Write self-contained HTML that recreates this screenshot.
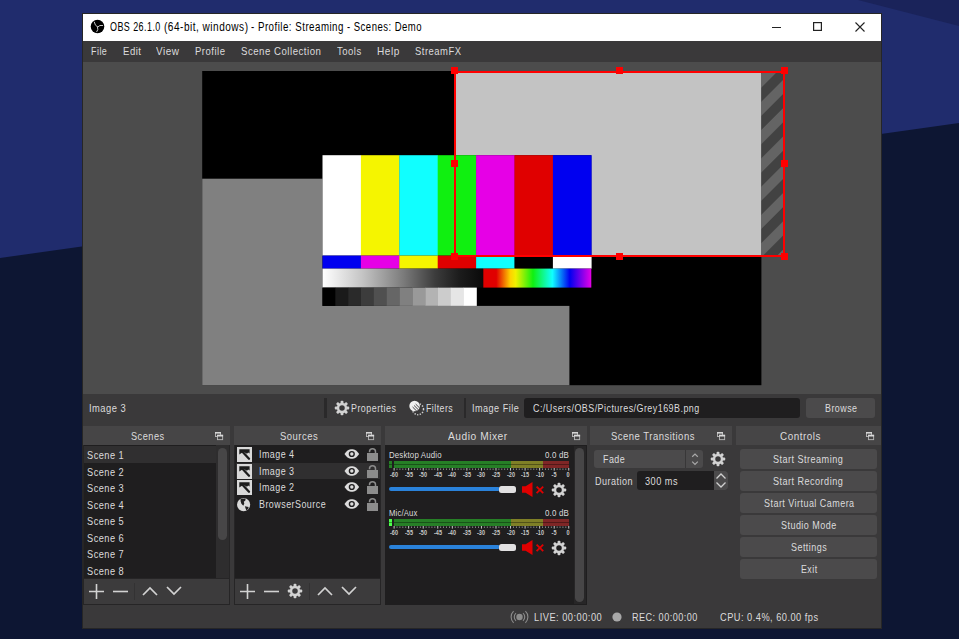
<!DOCTYPE html>
<html><head><meta charset="utf-8"><style>
html,body{margin:0;padding:0;width:959px;height:639px;overflow:hidden;background:#1f2a6b;}
body>div{position:absolute;}
.t{position:absolute;white-space:nowrap;font-family:"Liberation Sans",sans-serif;transform-origin:0 0;}
</style></head><body>
<svg style="position:absolute;left:0px;top:0px;" width="959" height="639" viewBox="0 0 959 639"><rect width="959" height="639" fill="#202c6d"/><polygon points="858,0 959,0 959,26" fill="#1a235a"/><polygon points="0,258 959,123 959,639 0,639" fill="#0d1633"/></svg>
<div style="left:82px;top:13px;width:800.00px;height:616.00px;background:#262626;"></div>
<div style="left:83px;top:14px;width:798.00px;height:614.00px;background:#3a393a;"></div>
<div style="left:83px;top:14px;width:798.00px;height:27.00px;background:#ffffff;"></div>
<svg style="position:absolute;left:90px;top:19px;" width="15" height="15" viewBox="0 0 15 15"><circle cx="7.5" cy="7.5" r="6.8" fill="#000"/><g fill="none" stroke="#c8c8c8" stroke-width="1.0" stroke-linecap="round"><path d="M7.6 8 Q4.8 6.8 4.3 3.2"/><path d="M7.6 8 Q9.6 5.6 12.6 6.4"/><path d="M7.6 8 Q8.6 10.8 6.8 12.8"/></g></svg>
<div class="t" style="left:109.80px;top:21px;font-size:12px;line-height:12px;letter-spacing:0.6px;color:#000;transform:scaleX(0.7463);">OBS 26.1.0</div>
<div class="t" style="left:163.60px;top:21px;font-size:12px;line-height:12px;letter-spacing:0.6px;color:#000;transform:scaleX(0.8375);">(64-bit, windows)</div>
<div class="t" style="left:251.00px;top:21px;font-size:12px;line-height:12px;letter-spacing:0.6px;color:#000;transform:scaleX(0.8098);">- Profile: Streaming</div>
<div class="t" style="left:347.00px;top:21px;font-size:12px;line-height:12px;letter-spacing:0.6px;color:#000;transform:scaleX(0.7942);">- Scenes: Demo</div>
<div style="left:772px;top:26.5px;width:9.00px;height:1.30px;background:#222;"></div>
<svg style="position:absolute;left:813px;top:22px;" width="9" height="9" viewBox="0 0 9 9"><rect x="0.6" y="0.6" width="7.8" height="7.8" fill="none" stroke="#222" stroke-width="1.2"/></svg>
<svg style="position:absolute;left:855px;top:22px;" width="10" height="10" viewBox="0 0 10 10"><path d="M0.5 0.5 L9.5 9.5 M9.5 0.5 L0.5 9.5" stroke="#222" stroke-width="1.1"/></svg>
<div style="left:83px;top:41px;width:798.00px;height:21.00px;background:#3a393a;"></div>
<div class="t" style="left:91.00px;top:46px;font-size:11.5px;line-height:11.5px;letter-spacing:0.6px;color:#dcdbdc;transform:scaleX(0.7783);">File</div>
<div class="t" style="left:122.80px;top:46px;font-size:11.5px;line-height:11.5px;letter-spacing:0.6px;color:#dcdbdc;transform:scaleX(0.8333);">Edit</div>
<div class="t" style="left:156.00px;top:46px;font-size:11.5px;line-height:11.5px;letter-spacing:0.6px;color:#dcdbdc;transform:scaleX(0.8647);">View</div>
<div class="t" style="left:195.00px;top:46px;font-size:11.5px;line-height:11.5px;letter-spacing:0.6px;color:#dcdbdc;transform:scaleX(0.8287);">Profile</div>
<div class="t" style="left:240.50px;top:46px;font-size:11.5px;line-height:11.5px;letter-spacing:0.6px;color:#dcdbdc;transform:scaleX(0.8384);">Scene Collection</div>
<div class="t" style="left:336.80px;top:46px;font-size:11.5px;line-height:11.5px;letter-spacing:0.6px;color:#dcdbdc;transform:scaleX(0.8253);">Tools</div>
<div class="t" style="left:376.90px;top:46px;font-size:11.5px;line-height:11.5px;letter-spacing:0.6px;color:#dcdbdc;transform:scaleX(0.8745);">Help</div>
<div class="t" style="left:414.50px;top:46px;font-size:11.5px;line-height:11.5px;letter-spacing:0.6px;color:#dcdbdc;transform:scaleX(0.8214);">StreamFX</div>
<div style="left:83px;top:62px;width:798.00px;height:332.00px;background:#4c4c4c;"></div>
<svg style="position:absolute;left:0px;top:0px;" width="959" height="639" viewBox="0 0 959 639"><defs><linearGradient id="gw" x1="0" x2="1"><stop offset="0" stop-color="#fff"/><stop offset="0.25" stop-color="#c4c4c4"/><stop offset="0.5" stop-color="#7c7c7c"/><stop offset="0.7" stop-color="#3c3c3c"/><stop offset="0.85" stop-color="#1c1c1c"/><stop offset="1" stop-color="#0a0a0a"/></linearGradient><linearGradient id="sp" x1="0" x2="1"><stop offset="0" stop-color="#e00000"/><stop offset="0.12" stop-color="#e00000"/><stop offset="0.25" stop-color="#ffd000"/><stop offset="0.3" stop-color="#f0f000"/><stop offset="0.46" stop-color="#10f010"/><stop offset="0.64" stop-color="#10ffff"/><stop offset="0.8" stop-color="#0000f0"/><stop offset="1" stop-color="#e600e6"/></linearGradient><pattern id="st" patternUnits="userSpaceOnUse" width="20" height="20" patternTransform="translate(0,14.5) rotate(45)"><rect width="20" height="20" fill="#424242"/><rect width="10" height="20" fill="#646464"/></pattern></defs><rect x="202.2" y="71" width="559.2" height="314.2" fill="#000"/><rect x="202.2" y="178.7" width="367.2" height="206.5" fill="#808080"/><rect x="456" y="73" width="305.4" height="182" fill="#c3c3c3"/><rect x="761.4" y="73" width="21.6" height="182" fill="url(#st)"/><rect x="322.5" y="155.2" width="268.8" height="150.7" fill="#000"/><rect x="322.50" y="155.2" width="38.70" height="100.40" fill="#ffffff"/><rect x="360.90" y="155.2" width="38.70" height="100.40" fill="#f5f500"/><rect x="399.30" y="155.2" width="38.70" height="100.40" fill="#10ffff"/><rect x="437.70" y="155.2" width="38.70" height="100.40" fill="#10f010"/><rect x="476.10" y="155.2" width="38.70" height="100.40" fill="#e600e6"/><rect x="514.50" y="155.2" width="38.70" height="100.40" fill="#e00000"/><rect x="552.90" y="155.2" width="38.70" height="100.40" fill="#0000f0"/><rect x="322.50" y="255.6" width="38.70" height="13.00" fill="#0000f0"/><rect x="360.90" y="255.6" width="38.70" height="13.00" fill="#e600e6"/><rect x="399.30" y="255.6" width="38.70" height="13.00" fill="#f5f500"/><rect x="437.70" y="255.6" width="38.70" height="13.00" fill="#e00000"/><rect x="476.10" y="255.6" width="38.70" height="13.00" fill="#10ffff"/><rect x="514.50" y="255.6" width="38.70" height="13.00" fill="#000000"/><rect x="552.90" y="255.6" width="38.70" height="13.00" fill="#ffffff"/><rect x="322.5" y="268.6" width="160.8" height="19" fill="url(#gw)"/><rect x="483.3" y="268.6" width="108" height="19" fill="url(#sp)"/><rect x="322.50" y="287.6" width="13.13" height="18.3" fill="rgb(0,0,0)"/><rect x="335.33" y="287.6" width="13.13" height="18.3" fill="rgb(26,26,26)"/><rect x="348.17" y="287.6" width="13.13" height="18.3" fill="rgb(42,42,42)"/><rect x="361.00" y="287.6" width="13.13" height="18.3" fill="rgb(60,60,60)"/><rect x="373.83" y="287.6" width="13.13" height="18.3" fill="rgb(80,80,80)"/><rect x="386.67" y="287.6" width="13.13" height="18.3" fill="rgb(102,102,102)"/><rect x="399.50" y="287.6" width="13.13" height="18.3" fill="rgb(128,128,128)"/><rect x="412.33" y="287.6" width="13.13" height="18.3" fill="rgb(153,153,153)"/><rect x="425.17" y="287.6" width="13.13" height="18.3" fill="rgb(179,179,179)"/><rect x="438.00" y="287.6" width="13.13" height="18.3" fill="rgb(204,204,204)"/><rect x="450.83" y="287.6" width="13.13" height="18.3" fill="rgb(230,230,230)"/><rect x="463.67" y="287.6" width="13.13" height="18.3" fill="rgb(255,255,255)"/><g fill="#ff0000"><rect x="454" y="71" width="331" height="2"/><rect x="454" y="255" width="331" height="2"/><rect x="454" y="71" width="2" height="186"/><rect x="783" y="71" width="2" height="186"/><rect x="451.0" y="67.0" width="7" height="7"/><rect x="451.0" y="160.0" width="7" height="7"/><rect x="451.0" y="253.0" width="7" height="7"/><rect x="616.0" y="67.0" width="7" height="7"/><rect x="616.0" y="253.0" width="7" height="7"/><rect x="781.0" y="67.0" width="7" height="7"/><rect x="781.0" y="160.0" width="7" height="7"/><rect x="781.0" y="253.0" width="7" height="7"/></g></svg>
<div style="left:83px;top:394px;width:798.00px;height:32.00px;background:#3a393a;"></div>
<div class="t" style="left:88.75px;top:403px;font-size:11.5px;line-height:11.5px;letter-spacing:0.6px;color:#dcdbdc;transform:scaleX(0.8131);">Image 3</div>
<div style="left:324.3px;top:398px;width:2.40px;height:20.00px;background:#2a292a;"></div>
<svg style="position:absolute;left:334.2px;top:400.3px;" width="16" height="16" viewBox="0 0 16 16"><g transform="translate(8 8) scale(1.0)" fill="#d2d2d2"><rect x="-1.45" y="-7.25" width="2.9" height="3.4" rx="1" transform="rotate(0)"/><rect x="-1.45" y="-7.25" width="2.9" height="3.4" rx="1" transform="rotate(45)"/><rect x="-1.45" y="-7.25" width="2.9" height="3.4" rx="1" transform="rotate(90)"/><rect x="-1.45" y="-7.25" width="2.9" height="3.4" rx="1" transform="rotate(135)"/><rect x="-1.45" y="-7.25" width="2.9" height="3.4" rx="1" transform="rotate(180)"/><rect x="-1.45" y="-7.25" width="2.9" height="3.4" rx="1" transform="rotate(225)"/><rect x="-1.45" y="-7.25" width="2.9" height="3.4" rx="1" transform="rotate(270)"/><rect x="-1.45" y="-7.25" width="2.9" height="3.4" rx="1" transform="rotate(315)"/><circle r="5.15"/><circle r="2.75" fill="#3a393a"/></g></svg>
<div class="t" style="left:351.30px;top:403px;font-size:11.5px;line-height:11.5px;letter-spacing:0.6px;color:#dcdbdc;transform:scaleX(0.7768);">Properties</div>
<svg style="position:absolute;left:409px;top:400px;" width="16" height="16" viewBox="0 0 16 16"><defs><clipPath id="fc"><circle cx="5.6" cy="6" r="5.3"/></clipPath></defs><circle cx="9" cy="9.2" r="5.5" fill="none" stroke="#cfcfcf" stroke-width="1.5" stroke-dasharray="1.25 1.45"/><circle cx="5.6" cy="6" r="5.3" fill="#3a393a"/><circle cx="5.6" cy="6" r="5.3" fill="#f0f0f0"/><g stroke="#3a393a" stroke-width="0.95" clip-path="url(#fc)"><path d="M5.1 5.5 L10 10.4 M6.7 4.1 L11.5 8.9 M3.6 7 L8.5 11.9"/></g></svg>
<div class="t" style="left:425.80px;top:403px;font-size:11.5px;line-height:11.5px;letter-spacing:0.6px;color:#dcdbdc;transform:scaleX(0.7650);">Filters</div>
<div style="left:463.7px;top:398px;width:2.60px;height:20.00px;background:#2a292a;"></div>
<div class="t" style="left:472.00px;top:403px;font-size:11.5px;line-height:11.5px;letter-spacing:0.6px;color:#dcdbdc;transform:scaleX(0.7902);">Image File</div>
<div style="left:524px;top:398px;width:276.00px;height:20.00px;background:#1f1e1f;border-radius:3px;"></div>
<div class="t" style="left:532.50px;top:403px;font-size:11.5px;line-height:11.5px;letter-spacing:0.6px;color:#dcdbdc;transform:scaleX(0.7763);">C:/Users/OBS/Pictures/Grey169B.png</div>
<div style="left:806px;top:398px;width:69.00px;height:20.00px;background:#4b4a4b;border-radius:3px;"></div>
<div class="t" style="left:824.70px;top:403px;font-size:11.5px;line-height:11.5px;letter-spacing:0.6px;color:#dcdbdc;transform:scaleX(0.7748);">Browse</div>
<div style="left:83px;top:426px;width:147.00px;height:19.00px;background:#464546;"></div>
<div class="t" style="left:131.25px;top:431px;font-size:11.5px;line-height:11.5px;letter-spacing:0.6px;color:#dcdbdc;transform:scaleX(0.8007);">Scenes</div>
<svg style="position:absolute;left:215px;top:432px;" width="9" height="9" viewBox="0 0 9 9"><rect x="0.45" y="0.45" width="5.1" height="4.1" fill="#464546" stroke="#b8b8b8" stroke-width="0.9"/><rect x="0" y="0" width="6" height="1.6" fill="#d4d4d4"/><rect x="2.45" y="3.25" width="5.2" height="4.4" fill="#464546" stroke="#b8b8b8" stroke-width="0.9"/><rect x="2" y="2.8" width="6.1" height="1.7" fill="#dadada"/></svg>
<div style="left:234px;top:426px;width:147.00px;height:19.00px;background:#464546;"></div>
<div class="t" style="left:279.75px;top:431px;font-size:11.5px;line-height:11.5px;letter-spacing:0.6px;color:#dcdbdc;transform:scaleX(0.8242);">Sources</div>
<svg style="position:absolute;left:366px;top:432px;" width="9" height="9" viewBox="0 0 9 9"><rect x="0.45" y="0.45" width="5.1" height="4.1" fill="#464546" stroke="#b8b8b8" stroke-width="0.9"/><rect x="0" y="0" width="6" height="1.6" fill="#d4d4d4"/><rect x="2.45" y="3.25" width="5.2" height="4.4" fill="#464546" stroke="#b8b8b8" stroke-width="0.9"/><rect x="2" y="2.8" width="6.1" height="1.7" fill="#dadada"/></svg>
<div style="left:385px;top:426px;width:202.00px;height:19.00px;background:#464546;"></div>
<div class="t" style="left:447.80px;top:431px;font-size:11.5px;line-height:11.5px;letter-spacing:0.6px;color:#dcdbdc;transform:scaleX(0.8876);">Audio Mixer</div>
<svg style="position:absolute;left:572px;top:432px;" width="9" height="9" viewBox="0 0 9 9"><rect x="0.45" y="0.45" width="5.1" height="4.1" fill="#464546" stroke="#b8b8b8" stroke-width="0.9"/><rect x="0" y="0" width="6" height="1.6" fill="#d4d4d4"/><rect x="2.45" y="3.25" width="5.2" height="4.4" fill="#464546" stroke="#b8b8b8" stroke-width="0.9"/><rect x="2" y="2.8" width="6.1" height="1.7" fill="#dadada"/></svg>
<div style="left:590px;top:426px;width:142.00px;height:19.00px;background:#464546;"></div>
<div class="t" style="left:610.80px;top:431px;font-size:11.5px;line-height:11.5px;letter-spacing:0.6px;color:#dcdbdc;transform:scaleX(0.8257);">Scene Transitions</div>
<svg style="position:absolute;left:717px;top:432px;" width="9" height="9" viewBox="0 0 9 9"><rect x="0.45" y="0.45" width="5.1" height="4.1" fill="#464546" stroke="#b8b8b8" stroke-width="0.9"/><rect x="0" y="0" width="6" height="1.6" fill="#d4d4d4"/><rect x="2.45" y="3.25" width="5.2" height="4.4" fill="#464546" stroke="#b8b8b8" stroke-width="0.9"/><rect x="2" y="2.8" width="6.1" height="1.7" fill="#dadada"/></svg>
<div style="left:736px;top:426px;width:145.00px;height:19.00px;background:#464546;"></div>
<div class="t" style="left:779.70px;top:431px;font-size:11.5px;line-height:11.5px;letter-spacing:0.6px;color:#dcdbdc;transform:scaleX(0.8574);">Controls</div>
<svg style="position:absolute;left:866px;top:432px;" width="9" height="9" viewBox="0 0 9 9"><rect x="0.45" y="0.45" width="5.1" height="4.1" fill="#464546" stroke="#b8b8b8" stroke-width="0.9"/><rect x="0" y="0" width="6" height="1.6" fill="#d4d4d4"/><rect x="2.45" y="3.25" width="5.2" height="4.4" fill="#464546" stroke="#b8b8b8" stroke-width="0.9"/><rect x="2" y="2.8" width="6.1" height="1.7" fill="#dadada"/></svg>
<div style="left:83px;top:445px;width:147.00px;height:160.00px;background:#262526;"></div>
<div style="left:84px;top:445px;width:132.00px;height:133.00px;background:#1f1e1f;"></div>
<div style="left:216px;top:445px;width:13.00px;height:133.00px;background:#2e2d2e;"></div>
<div style="left:84px;top:446px;width:132.00px;height:17.00px;background:#302f30;"></div>
<div style="left:218px;top:448px;width:9.00px;height:92.00px;background:#474647;border-radius:4.5px;"></div>
<div class="t" style="left:86.70px;top:450px;font-size:11.5px;line-height:11.5px;letter-spacing:0.6px;color:#dcdbdc;transform:scaleX(0.8013);">Scene 1</div>
<div class="t" style="left:86.70px;top:467px;font-size:11.5px;line-height:11.5px;letter-spacing:0.6px;color:#dcdbdc;transform:scaleX(0.8013);">Scene 2</div>
<div class="t" style="left:86.70px;top:483px;font-size:11.5px;line-height:11.5px;letter-spacing:0.6px;color:#dcdbdc;transform:scaleX(0.8013);">Scene 3</div>
<div class="t" style="left:86.70px;top:500px;font-size:11.5px;line-height:11.5px;letter-spacing:0.6px;color:#dcdbdc;transform:scaleX(0.8013);">Scene 4</div>
<div class="t" style="left:86.70px;top:516px;font-size:11.5px;line-height:11.5px;letter-spacing:0.6px;color:#dcdbdc;transform:scaleX(0.8013);">Scene 5</div>
<div class="t" style="left:86.70px;top:533px;font-size:11.5px;line-height:11.5px;letter-spacing:0.6px;color:#dcdbdc;transform:scaleX(0.8013);">Scene 6</div>
<div class="t" style="left:86.70px;top:549px;font-size:11.5px;line-height:11.5px;letter-spacing:0.6px;color:#dcdbdc;transform:scaleX(0.8013);">Scene 7</div>
<div class="t" style="left:86.70px;top:566px;font-size:11.5px;line-height:11.5px;letter-spacing:0.6px;color:#dcdbdc;transform:scaleX(0.8013);">Scene 8</div>
<div style="left:83px;top:578px;width:147.00px;height:27.00px;background:#262526;"></div>
<div style="left:84px;top:579px;width:145.00px;height:25.00px;background:#3c3b3c;"></div>
<svg style="position:absolute;left:89px;top:584px;" width="15" height="15" viewBox="0 0 15 15"><path d="M7.5 0 V15 M0 7.5 H15" stroke="#d2d2d2" stroke-width="1.6"/></svg>
<svg style="position:absolute;left:113px;top:584px;" width="15" height="15" viewBox="0 0 15 15"><path d="M0 7.5 H15" stroke="#d2d2d2" stroke-width="1.6"/></svg>
<div style="left:134px;top:583px;width:1.00px;height:17.00px;background:#333233;"></div>
<svg style="position:absolute;left:142px;top:586px;" width="16" height="10" viewBox="0 0 16 10"><path d="M1 9 L8 2 L15 9" fill="none" stroke="#d2d2d2" stroke-width="1.7"/></svg>
<svg style="position:absolute;left:165.5px;top:586px;" width="16" height="10" viewBox="0 0 16 10"><path d="M1 1 L8 8 L15 1" fill="none" stroke="#d2d2d2" stroke-width="1.7"/></svg>
<div style="left:234px;top:445px;width:147.00px;height:160.00px;background:#262526;"></div>
<div style="left:235px;top:445px;width:145.00px;height:133.00px;background:#1f1e1f;"></div>
<div style="left:236px;top:462.5px;width:144.00px;height:16.50px;background:#302f30;"></div>
<svg style="position:absolute;left:237px;top:447.0px;" width="15" height="15" viewBox="0 0 15 15"><rect width="15" height="15" fill="#d9d9d9"/><path d="M2.3 2.2 H12.6 V6.5 L11.2 5.5 L10 6.8 L6.4 4.8 L2.3 7.5 Z" fill="#1c1c1c"/><path d="M5 4.3 L12 11.7" stroke="#1c1c1c" stroke-width="2.3" stroke-linecap="round"/></svg>
<div class="t" style="left:259.20px;top:449px;font-size:11.5px;line-height:11.5px;letter-spacing:0.6px;color:#dcdbdc;transform:scaleX(0.7762);">Image 4</div>
<svg style="position:absolute;left:343.5px;top:449.2px;" width="16" height="10" viewBox="0 0 16 10"><path d="M0.5,5 C3,1.2 5,0.2 7.8,0.2 C10.6,0.2 12.6,1.2 15.1,5 C12.6,8.8 10.6,9.8 7.8,9.8 C5,9.8 3,8.8 0.5,5 Z" fill="#dcdcdc"/><circle cx="7.8" cy="5" r="3.1" fill="#1f1e1f"/><circle cx="7.8" cy="5" r="1.7" fill="#dcdcdc"/></svg>
<svg style="position:absolute;left:366px;top:446.0px;" width="13" height="16" viewBox="0 0 13 16"><path d="M3.5 6.2 V5.7 A3 3 0 0 1 9.5 5.7 V7.5" fill="none" stroke="#8c8c8c" stroke-width="1.5"/><rect x="1" y="7" width="11" height="8" fill="#8c8c8c"/></svg>
<svg style="position:absolute;left:237px;top:463.55px;" width="15" height="15" viewBox="0 0 15 15"><rect width="15" height="15" fill="#d9d9d9"/><path d="M2.3 2.2 H12.6 V6.5 L11.2 5.5 L10 6.8 L6.4 4.8 L2.3 7.5 Z" fill="#1c1c1c"/><path d="M5 4.3 L12 11.7" stroke="#1c1c1c" stroke-width="2.3" stroke-linecap="round"/></svg>
<div class="t" style="left:259.20px;top:466px;font-size:11.5px;line-height:11.5px;letter-spacing:0.6px;color:#dcdbdc;transform:scaleX(0.7762);">Image 3</div>
<svg style="position:absolute;left:343.5px;top:465.75px;" width="16" height="10" viewBox="0 0 16 10"><path d="M0.5,5 C3,1.2 5,0.2 7.8,0.2 C10.6,0.2 12.6,1.2 15.1,5 C12.6,8.8 10.6,9.8 7.8,9.8 C5,9.8 3,8.8 0.5,5 Z" fill="#dcdcdc"/><circle cx="7.8" cy="5" r="3.1" fill="#1f1e1f"/><circle cx="7.8" cy="5" r="1.7" fill="#dcdcdc"/></svg>
<svg style="position:absolute;left:366px;top:462.55px;" width="13" height="16" viewBox="0 0 13 16"><path d="M3.5 6.2 V5.7 A3 3 0 0 1 9.5 5.7 V7.5" fill="none" stroke="#8c8c8c" stroke-width="1.5"/><rect x="1" y="7" width="11" height="8" fill="#8c8c8c"/></svg>
<svg style="position:absolute;left:237px;top:480.1px;" width="15" height="15" viewBox="0 0 15 15"><rect width="15" height="15" fill="#d9d9d9"/><path d="M2.3 2.2 H12.6 V6.5 L11.2 5.5 L10 6.8 L6.4 4.8 L2.3 7.5 Z" fill="#1c1c1c"/><path d="M5 4.3 L12 11.7" stroke="#1c1c1c" stroke-width="2.3" stroke-linecap="round"/></svg>
<div class="t" style="left:259.20px;top:482px;font-size:11.5px;line-height:11.5px;letter-spacing:0.6px;color:#dcdbdc;transform:scaleX(0.7762);">Image 2</div>
<svg style="position:absolute;left:343.5px;top:482.3px;" width="16" height="10" viewBox="0 0 16 10"><path d="M0.5,5 C3,1.2 5,0.2 7.8,0.2 C10.6,0.2 12.6,1.2 15.1,5 C12.6,8.8 10.6,9.8 7.8,9.8 C5,9.8 3,8.8 0.5,5 Z" fill="#dcdcdc"/><circle cx="7.8" cy="5" r="3.1" fill="#1f1e1f"/><circle cx="7.8" cy="5" r="1.7" fill="#dcdcdc"/></svg>
<svg style="position:absolute;left:366px;top:479.1px;" width="13" height="16" viewBox="0 0 13 16"><path d="M3.5 6.2 V5.7 A3 3 0 0 1 9.5 5.7 V7.5" fill="none" stroke="#8c8c8c" stroke-width="1.5"/><rect x="1" y="7" width="11" height="8" fill="#8c8c8c"/></svg>
<svg style="position:absolute;left:237px;top:497.65px;" width="14" height="14" viewBox="0 0 14 14"><circle cx="6.6" cy="6.65" r="6.6" fill="#d9d9d9"/><path d="M3.6 0.8 L8.6 0.5 L8.4 2.6 L6.8 3.8 L7.3 5.6 L6.3 7.8 L4.4 5.8 L3.6 3.2 Z" fill="#1f1e1f"/><path d="M7.9 8.2 L11.6 9 L11.2 10.8 L9.4 12.6 L8.7 10.8 Z" fill="#1f1e1f"/></svg>
<div class="t" style="left:259.20px;top:499px;font-size:11.5px;line-height:11.5px;letter-spacing:0.6px;color:#dcdbdc;transform:scaleX(0.7762);">BrowserSource</div>
<svg style="position:absolute;left:343.5px;top:498.85px;" width="16" height="10" viewBox="0 0 16 10"><path d="M0.5,5 C3,1.2 5,0.2 7.8,0.2 C10.6,0.2 12.6,1.2 15.1,5 C12.6,8.8 10.6,9.8 7.8,9.8 C5,9.8 3,8.8 0.5,5 Z" fill="#dcdcdc"/><circle cx="7.8" cy="5" r="3.1" fill="#1f1e1f"/><circle cx="7.8" cy="5" r="1.7" fill="#dcdcdc"/></svg>
<svg style="position:absolute;left:366px;top:495.65px;" width="13" height="16" viewBox="0 0 13 16"><path d="M3.5 6.2 V5.7 A3 3 0 0 1 9.5 5.7 V7.5" fill="none" stroke="#8c8c8c" stroke-width="1.5"/><rect x="1" y="7" width="11" height="8" fill="#8c8c8c"/></svg>
<div style="left:234px;top:578px;width:147.00px;height:27.00px;background:#262526;"></div>
<div style="left:235px;top:579px;width:145.00px;height:25.00px;background:#3c3b3c;"></div>
<svg style="position:absolute;left:240px;top:584px;" width="15" height="15" viewBox="0 0 15 15"><path d="M7.5 0 V15 M0 7.5 H15" stroke="#d2d2d2" stroke-width="1.6"/></svg>
<svg style="position:absolute;left:264px;top:584px;" width="15" height="15" viewBox="0 0 15 15"><path d="M0 7.5 H15" stroke="#d2d2d2" stroke-width="1.6"/></svg>
<svg style="position:absolute;left:287.4px;top:583.4px;" width="16" height="16" viewBox="0 0 16 16"><g transform="translate(8 8) scale(1.0)" fill="#d2d2d2"><rect x="-1.45" y="-7.25" width="2.9" height="3.4" rx="1" transform="rotate(0)"/><rect x="-1.45" y="-7.25" width="2.9" height="3.4" rx="1" transform="rotate(45)"/><rect x="-1.45" y="-7.25" width="2.9" height="3.4" rx="1" transform="rotate(90)"/><rect x="-1.45" y="-7.25" width="2.9" height="3.4" rx="1" transform="rotate(135)"/><rect x="-1.45" y="-7.25" width="2.9" height="3.4" rx="1" transform="rotate(180)"/><rect x="-1.45" y="-7.25" width="2.9" height="3.4" rx="1" transform="rotate(225)"/><rect x="-1.45" y="-7.25" width="2.9" height="3.4" rx="1" transform="rotate(270)"/><rect x="-1.45" y="-7.25" width="2.9" height="3.4" rx="1" transform="rotate(315)"/><circle r="5.15"/><circle r="2.75" fill="#3c3b3c"/></g></svg>
<div style="left:309px;top:583px;width:1.00px;height:17.00px;background:#333233;"></div>
<svg style="position:absolute;left:316.5px;top:586px;" width="16" height="10" viewBox="0 0 16 10"><path d="M1 9 L8 2 L15 9" fill="none" stroke="#d2d2d2" stroke-width="1.7"/></svg>
<svg style="position:absolute;left:340.5px;top:586px;" width="16" height="10" viewBox="0 0 16 10"><path d="M1 1 L8 8 L15 1" fill="none" stroke="#d2d2d2" stroke-width="1.7"/></svg>
<div style="left:385px;top:445px;width:202.00px;height:160.00px;background:#1f1e1f;"></div>
<div style="left:574px;top:446px;width:12.00px;height:158.00px;background:#272627;"></div>
<div style="left:575px;top:448px;width:9.00px;height:154.00px;background:#474647;border-radius:4.5px;"></div>
<div class="t" style="left:389.40px;top:451px;font-size:9px;line-height:9px;letter-spacing:0.2px;color:#dcdbdc;transform:scaleX(0.8692);">Desktop Audio</div>
<div class="t" style="left:545.25px;top:451px;font-size:9px;line-height:9px;letter-spacing:0.2px;color:#dcdbdc;transform:scaleX(0.8796);">0.0 dB</div>
<div style="left:394.1px;top:461.4px;width:116.50px;height:6.60px;background:#267f26;"></div>
<div style="left:510.6px;top:461.4px;width:32.40px;height:6.60px;background:#7f7f26;"></div>
<div style="left:543px;top:461.4px;width:26.00px;height:6.60px;background:#7f2626;"></div>
<div style="left:389.4px;top:461.4px;width:2.80px;height:6.60px;background:#267f26;"></div>
<div style="left:389.4px;top:464.3px;width:179.60px;height:0.60px;background:rgba(0,0,0,0.35);"></div>
<div style="left:392.2px;top:461.4px;width:1.90px;height:6.60px;background:#1f1e1f;"></div>
<svg style="position:absolute;left:389px;top:468.1px;" width="182" height="3" viewBox="0 0 182 3"><rect x="4.60" y="0" width="1" height="2.6" fill="#c8c8c8"/><rect x="7.61" y="0.4" width="0.8" height="1.6" fill="#9a9a9a"/><rect x="10.52" y="0.4" width="0.8" height="1.6" fill="#9a9a9a"/><rect x="13.43" y="0.4" width="0.8" height="1.6" fill="#9a9a9a"/><rect x="16.34" y="0.4" width="0.8" height="1.6" fill="#9a9a9a"/><rect x="19.15" y="0" width="1" height="2.6" fill="#c8c8c8"/><rect x="22.16" y="0.4" width="0.8" height="1.6" fill="#9a9a9a"/><rect x="25.08" y="0.4" width="0.8" height="1.6" fill="#9a9a9a"/><rect x="27.99" y="0.4" width="0.8" height="1.6" fill="#9a9a9a"/><rect x="30.90" y="0.4" width="0.8" height="1.6" fill="#9a9a9a"/><rect x="33.71" y="0" width="1" height="2.6" fill="#c8c8c8"/><rect x="36.72" y="0.4" width="0.8" height="1.6" fill="#9a9a9a"/><rect x="39.63" y="0.4" width="0.8" height="1.6" fill="#9a9a9a"/><rect x="42.54" y="0.4" width="0.8" height="1.6" fill="#9a9a9a"/><rect x="45.45" y="0.4" width="0.8" height="1.6" fill="#9a9a9a"/><rect x="48.26" y="0" width="1" height="2.6" fill="#c8c8c8"/><rect x="51.27" y="0.4" width="0.8" height="1.6" fill="#9a9a9a"/><rect x="54.18" y="0.4" width="0.8" height="1.6" fill="#9a9a9a"/><rect x="57.10" y="0.4" width="0.8" height="1.6" fill="#9a9a9a"/><rect x="60.01" y="0.4" width="0.8" height="1.6" fill="#9a9a9a"/><rect x="62.82" y="0" width="1" height="2.6" fill="#c8c8c8"/><rect x="65.83" y="0.4" width="0.8" height="1.6" fill="#9a9a9a"/><rect x="68.74" y="0.4" width="0.8" height="1.6" fill="#9a9a9a"/><rect x="71.65" y="0.4" width="0.8" height="1.6" fill="#9a9a9a"/><rect x="74.56" y="0.4" width="0.8" height="1.6" fill="#9a9a9a"/><rect x="77.37" y="0" width="1" height="2.6" fill="#c8c8c8"/><rect x="80.38" y="0.4" width="0.8" height="1.6" fill="#9a9a9a"/><rect x="83.29" y="0.4" width="0.8" height="1.6" fill="#9a9a9a"/><rect x="86.20" y="0.4" width="0.8" height="1.6" fill="#9a9a9a"/><rect x="89.11" y="0.4" width="0.8" height="1.6" fill="#9a9a9a"/><rect x="91.93" y="0" width="1" height="2.6" fill="#c8c8c8"/><rect x="94.94" y="0.4" width="0.8" height="1.6" fill="#9a9a9a"/><rect x="97.85" y="0.4" width="0.8" height="1.6" fill="#9a9a9a"/><rect x="100.76" y="0.4" width="0.8" height="1.6" fill="#9a9a9a"/><rect x="103.67" y="0.4" width="0.8" height="1.6" fill="#9a9a9a"/><rect x="106.48" y="0" width="1" height="2.6" fill="#c8c8c8"/><rect x="109.49" y="0.4" width="0.8" height="1.6" fill="#9a9a9a"/><rect x="112.40" y="0.4" width="0.8" height="1.6" fill="#9a9a9a"/><rect x="115.31" y="0.4" width="0.8" height="1.6" fill="#9a9a9a"/><rect x="118.22" y="0.4" width="0.8" height="1.6" fill="#9a9a9a"/><rect x="121.03" y="0" width="1" height="2.6" fill="#c8c8c8"/><rect x="124.04" y="0.4" width="0.8" height="1.6" fill="#9a9a9a"/><rect x="126.96" y="0.4" width="0.8" height="1.6" fill="#9a9a9a"/><rect x="129.87" y="0.4" width="0.8" height="1.6" fill="#9a9a9a"/><rect x="132.78" y="0.4" width="0.8" height="1.6" fill="#9a9a9a"/><rect x="135.59" y="0" width="1" height="2.6" fill="#c8c8c8"/><rect x="138.60" y="0.4" width="0.8" height="1.6" fill="#9a9a9a"/><rect x="141.51" y="0.4" width="0.8" height="1.6" fill="#9a9a9a"/><rect x="144.42" y="0.4" width="0.8" height="1.6" fill="#9a9a9a"/><rect x="147.33" y="0.4" width="0.8" height="1.6" fill="#9a9a9a"/><rect x="150.14" y="0" width="1" height="2.6" fill="#c8c8c8"/><rect x="153.15" y="0.4" width="0.8" height="1.6" fill="#9a9a9a"/><rect x="156.06" y="0.4" width="0.8" height="1.6" fill="#9a9a9a"/><rect x="158.97" y="0.4" width="0.8" height="1.6" fill="#9a9a9a"/><rect x="161.88" y="0.4" width="0.8" height="1.6" fill="#9a9a9a"/><rect x="164.70" y="0" width="1" height="2.6" fill="#c8c8c8"/><rect x="167.71" y="0.4" width="0.8" height="1.6" fill="#9a9a9a"/><rect x="170.62" y="0.4" width="0.8" height="1.6" fill="#9a9a9a"/><rect x="173.53" y="0.4" width="0.8" height="1.6" fill="#9a9a9a"/><rect x="176.44" y="0.4" width="0.8" height="1.6" fill="#9a9a9a"/><rect x="179.25" y="0" width="1" height="2.6" fill="#c8c8c8"/></svg>
<div class="t" style="left:386.10px;top:472px;width:16px;text-align:center;font-size:6.5px;line-height:6.5px;color:#c8c8c8;font-weight:bold;transform:scaleX(0.85);transform-origin:50% 0">-60</div>
<div class="t" style="left:400.65px;top:472px;width:16px;text-align:center;font-size:6.5px;line-height:6.5px;color:#c8c8c8;font-weight:bold;transform:scaleX(0.85);transform-origin:50% 0">-55</div>
<div class="t" style="left:415.21px;top:472px;width:16px;text-align:center;font-size:6.5px;line-height:6.5px;color:#c8c8c8;font-weight:bold;transform:scaleX(0.85);transform-origin:50% 0">-50</div>
<div class="t" style="left:429.76px;top:472px;width:16px;text-align:center;font-size:6.5px;line-height:6.5px;color:#c8c8c8;font-weight:bold;transform:scaleX(0.85);transform-origin:50% 0">-45</div>
<div class="t" style="left:444.32px;top:472px;width:16px;text-align:center;font-size:6.5px;line-height:6.5px;color:#c8c8c8;font-weight:bold;transform:scaleX(0.85);transform-origin:50% 0">-40</div>
<div class="t" style="left:458.87px;top:472px;width:16px;text-align:center;font-size:6.5px;line-height:6.5px;color:#c8c8c8;font-weight:bold;transform:scaleX(0.85);transform-origin:50% 0">-35</div>
<div class="t" style="left:473.43px;top:472px;width:16px;text-align:center;font-size:6.5px;line-height:6.5px;color:#c8c8c8;font-weight:bold;transform:scaleX(0.85);transform-origin:50% 0">-30</div>
<div class="t" style="left:487.98px;top:472px;width:16px;text-align:center;font-size:6.5px;line-height:6.5px;color:#c8c8c8;font-weight:bold;transform:scaleX(0.85);transform-origin:50% 0">-25</div>
<div class="t" style="left:502.53px;top:472px;width:16px;text-align:center;font-size:6.5px;line-height:6.5px;color:#c8c8c8;font-weight:bold;transform:scaleX(0.85);transform-origin:50% 0">-20</div>
<div class="t" style="left:517.09px;top:472px;width:16px;text-align:center;font-size:6.5px;line-height:6.5px;color:#c8c8c8;font-weight:bold;transform:scaleX(0.85);transform-origin:50% 0">-15</div>
<div class="t" style="left:531.64px;top:472px;width:16px;text-align:center;font-size:6.5px;line-height:6.5px;color:#c8c8c8;font-weight:bold;transform:scaleX(0.85);transform-origin:50% 0">-10</div>
<div class="t" style="left:546.20px;top:472px;width:16px;text-align:center;font-size:6.5px;line-height:6.5px;color:#c8c8c8;font-weight:bold;transform:scaleX(0.85);transform-origin:50% 0">-5</div>
<div class="t" style="left:559.55px;top:472px;width:16px;text-align:center;font-size:6.5px;line-height:6.5px;color:#c8c8c8;font-weight:bold;transform:scaleX(0.85);transform-origin:50% 0">0</div>
<div style="left:389.4px;top:487px;width:110.60px;height:4.00px;background:#2a82da;border-radius:2px;"></div>
<div style="left:499px;top:485.6px;width:17.00px;height:7.30px;background:#e1e0e1;border-radius:2.5px;"></div>
<svg style="position:absolute;left:522px;top:482px;" width="23" height="15" viewBox="0 0 23 15"><path d="M0 4.3 H3.6 L10.5 0 V15 L3.6 10.7 H0 Z" fill="#e00000"/><path d="M14.6 4.6 L21.2 11.2 M21.2 4.6 L14.6 11.2" stroke="#e00000" stroke-width="1.8"/></svg>
<svg style="position:absolute;left:551.2px;top:481.6px;" width="16" height="16" viewBox="0 0 16 16"><g transform="translate(8 8) scale(1.0)" fill="#d2d2d2"><rect x="-1.45" y="-7.25" width="2.9" height="3.4" rx="1" transform="rotate(0)"/><rect x="-1.45" y="-7.25" width="2.9" height="3.4" rx="1" transform="rotate(45)"/><rect x="-1.45" y="-7.25" width="2.9" height="3.4" rx="1" transform="rotate(90)"/><rect x="-1.45" y="-7.25" width="2.9" height="3.4" rx="1" transform="rotate(135)"/><rect x="-1.45" y="-7.25" width="2.9" height="3.4" rx="1" transform="rotate(180)"/><rect x="-1.45" y="-7.25" width="2.9" height="3.4" rx="1" transform="rotate(225)"/><rect x="-1.45" y="-7.25" width="2.9" height="3.4" rx="1" transform="rotate(270)"/><rect x="-1.45" y="-7.25" width="2.9" height="3.4" rx="1" transform="rotate(315)"/><circle r="5.15"/><circle r="2.75" fill="#1f1e1f"/></g></svg>
<div class="t" style="left:389.40px;top:509px;font-size:9px;line-height:9px;letter-spacing:0.2px;color:#dcdbdc;transform:scaleX(0.8554);">Mic/Aux</div>
<div class="t" style="left:545.25px;top:509px;font-size:9px;line-height:9px;letter-spacing:0.2px;color:#dcdbdc;transform:scaleX(0.8796);">0.0 dB</div>
<div style="left:394.1px;top:519.4px;width:116.50px;height:6.60px;background:#267f26;"></div>
<div style="left:510.6px;top:519.4px;width:32.40px;height:6.60px;background:#7f7f26;"></div>
<div style="left:543px;top:519.4px;width:26.00px;height:6.60px;background:#7f2626;"></div>
<div style="left:389.4px;top:519.4px;width:2.80px;height:6.60px;background:#4cff4c;"></div>
<div style="left:389.4px;top:522.3px;width:179.60px;height:0.60px;background:rgba(0,0,0,0.35);"></div>
<div style="left:392.2px;top:519.4px;width:1.90px;height:6.60px;background:#1f1e1f;"></div>
<svg style="position:absolute;left:389px;top:526.1px;" width="182" height="3" viewBox="0 0 182 3"><rect x="4.60" y="0" width="1" height="2.6" fill="#c8c8c8"/><rect x="7.61" y="0.4" width="0.8" height="1.6" fill="#9a9a9a"/><rect x="10.52" y="0.4" width="0.8" height="1.6" fill="#9a9a9a"/><rect x="13.43" y="0.4" width="0.8" height="1.6" fill="#9a9a9a"/><rect x="16.34" y="0.4" width="0.8" height="1.6" fill="#9a9a9a"/><rect x="19.15" y="0" width="1" height="2.6" fill="#c8c8c8"/><rect x="22.16" y="0.4" width="0.8" height="1.6" fill="#9a9a9a"/><rect x="25.08" y="0.4" width="0.8" height="1.6" fill="#9a9a9a"/><rect x="27.99" y="0.4" width="0.8" height="1.6" fill="#9a9a9a"/><rect x="30.90" y="0.4" width="0.8" height="1.6" fill="#9a9a9a"/><rect x="33.71" y="0" width="1" height="2.6" fill="#c8c8c8"/><rect x="36.72" y="0.4" width="0.8" height="1.6" fill="#9a9a9a"/><rect x="39.63" y="0.4" width="0.8" height="1.6" fill="#9a9a9a"/><rect x="42.54" y="0.4" width="0.8" height="1.6" fill="#9a9a9a"/><rect x="45.45" y="0.4" width="0.8" height="1.6" fill="#9a9a9a"/><rect x="48.26" y="0" width="1" height="2.6" fill="#c8c8c8"/><rect x="51.27" y="0.4" width="0.8" height="1.6" fill="#9a9a9a"/><rect x="54.18" y="0.4" width="0.8" height="1.6" fill="#9a9a9a"/><rect x="57.10" y="0.4" width="0.8" height="1.6" fill="#9a9a9a"/><rect x="60.01" y="0.4" width="0.8" height="1.6" fill="#9a9a9a"/><rect x="62.82" y="0" width="1" height="2.6" fill="#c8c8c8"/><rect x="65.83" y="0.4" width="0.8" height="1.6" fill="#9a9a9a"/><rect x="68.74" y="0.4" width="0.8" height="1.6" fill="#9a9a9a"/><rect x="71.65" y="0.4" width="0.8" height="1.6" fill="#9a9a9a"/><rect x="74.56" y="0.4" width="0.8" height="1.6" fill="#9a9a9a"/><rect x="77.37" y="0" width="1" height="2.6" fill="#c8c8c8"/><rect x="80.38" y="0.4" width="0.8" height="1.6" fill="#9a9a9a"/><rect x="83.29" y="0.4" width="0.8" height="1.6" fill="#9a9a9a"/><rect x="86.20" y="0.4" width="0.8" height="1.6" fill="#9a9a9a"/><rect x="89.11" y="0.4" width="0.8" height="1.6" fill="#9a9a9a"/><rect x="91.93" y="0" width="1" height="2.6" fill="#c8c8c8"/><rect x="94.94" y="0.4" width="0.8" height="1.6" fill="#9a9a9a"/><rect x="97.85" y="0.4" width="0.8" height="1.6" fill="#9a9a9a"/><rect x="100.76" y="0.4" width="0.8" height="1.6" fill="#9a9a9a"/><rect x="103.67" y="0.4" width="0.8" height="1.6" fill="#9a9a9a"/><rect x="106.48" y="0" width="1" height="2.6" fill="#c8c8c8"/><rect x="109.49" y="0.4" width="0.8" height="1.6" fill="#9a9a9a"/><rect x="112.40" y="0.4" width="0.8" height="1.6" fill="#9a9a9a"/><rect x="115.31" y="0.4" width="0.8" height="1.6" fill="#9a9a9a"/><rect x="118.22" y="0.4" width="0.8" height="1.6" fill="#9a9a9a"/><rect x="121.03" y="0" width="1" height="2.6" fill="#c8c8c8"/><rect x="124.04" y="0.4" width="0.8" height="1.6" fill="#9a9a9a"/><rect x="126.96" y="0.4" width="0.8" height="1.6" fill="#9a9a9a"/><rect x="129.87" y="0.4" width="0.8" height="1.6" fill="#9a9a9a"/><rect x="132.78" y="0.4" width="0.8" height="1.6" fill="#9a9a9a"/><rect x="135.59" y="0" width="1" height="2.6" fill="#c8c8c8"/><rect x="138.60" y="0.4" width="0.8" height="1.6" fill="#9a9a9a"/><rect x="141.51" y="0.4" width="0.8" height="1.6" fill="#9a9a9a"/><rect x="144.42" y="0.4" width="0.8" height="1.6" fill="#9a9a9a"/><rect x="147.33" y="0.4" width="0.8" height="1.6" fill="#9a9a9a"/><rect x="150.14" y="0" width="1" height="2.6" fill="#c8c8c8"/><rect x="153.15" y="0.4" width="0.8" height="1.6" fill="#9a9a9a"/><rect x="156.06" y="0.4" width="0.8" height="1.6" fill="#9a9a9a"/><rect x="158.97" y="0.4" width="0.8" height="1.6" fill="#9a9a9a"/><rect x="161.88" y="0.4" width="0.8" height="1.6" fill="#9a9a9a"/><rect x="164.70" y="0" width="1" height="2.6" fill="#c8c8c8"/><rect x="167.71" y="0.4" width="0.8" height="1.6" fill="#9a9a9a"/><rect x="170.62" y="0.4" width="0.8" height="1.6" fill="#9a9a9a"/><rect x="173.53" y="0.4" width="0.8" height="1.6" fill="#9a9a9a"/><rect x="176.44" y="0.4" width="0.8" height="1.6" fill="#9a9a9a"/><rect x="179.25" y="0" width="1" height="2.6" fill="#c8c8c8"/></svg>
<div class="t" style="left:386.10px;top:530px;width:16px;text-align:center;font-size:6.5px;line-height:6.5px;color:#c8c8c8;font-weight:bold;transform:scaleX(0.85);transform-origin:50% 0">-60</div>
<div class="t" style="left:400.65px;top:530px;width:16px;text-align:center;font-size:6.5px;line-height:6.5px;color:#c8c8c8;font-weight:bold;transform:scaleX(0.85);transform-origin:50% 0">-55</div>
<div class="t" style="left:415.21px;top:530px;width:16px;text-align:center;font-size:6.5px;line-height:6.5px;color:#c8c8c8;font-weight:bold;transform:scaleX(0.85);transform-origin:50% 0">-50</div>
<div class="t" style="left:429.76px;top:530px;width:16px;text-align:center;font-size:6.5px;line-height:6.5px;color:#c8c8c8;font-weight:bold;transform:scaleX(0.85);transform-origin:50% 0">-45</div>
<div class="t" style="left:444.32px;top:530px;width:16px;text-align:center;font-size:6.5px;line-height:6.5px;color:#c8c8c8;font-weight:bold;transform:scaleX(0.85);transform-origin:50% 0">-40</div>
<div class="t" style="left:458.87px;top:530px;width:16px;text-align:center;font-size:6.5px;line-height:6.5px;color:#c8c8c8;font-weight:bold;transform:scaleX(0.85);transform-origin:50% 0">-35</div>
<div class="t" style="left:473.43px;top:530px;width:16px;text-align:center;font-size:6.5px;line-height:6.5px;color:#c8c8c8;font-weight:bold;transform:scaleX(0.85);transform-origin:50% 0">-30</div>
<div class="t" style="left:487.98px;top:530px;width:16px;text-align:center;font-size:6.5px;line-height:6.5px;color:#c8c8c8;font-weight:bold;transform:scaleX(0.85);transform-origin:50% 0">-25</div>
<div class="t" style="left:502.53px;top:530px;width:16px;text-align:center;font-size:6.5px;line-height:6.5px;color:#c8c8c8;font-weight:bold;transform:scaleX(0.85);transform-origin:50% 0">-20</div>
<div class="t" style="left:517.09px;top:530px;width:16px;text-align:center;font-size:6.5px;line-height:6.5px;color:#c8c8c8;font-weight:bold;transform:scaleX(0.85);transform-origin:50% 0">-15</div>
<div class="t" style="left:531.64px;top:530px;width:16px;text-align:center;font-size:6.5px;line-height:6.5px;color:#c8c8c8;font-weight:bold;transform:scaleX(0.85);transform-origin:50% 0">-10</div>
<div class="t" style="left:546.20px;top:530px;width:16px;text-align:center;font-size:6.5px;line-height:6.5px;color:#c8c8c8;font-weight:bold;transform:scaleX(0.85);transform-origin:50% 0">-5</div>
<div class="t" style="left:559.55px;top:530px;width:16px;text-align:center;font-size:6.5px;line-height:6.5px;color:#c8c8c8;font-weight:bold;transform:scaleX(0.85);transform-origin:50% 0">0</div>
<div style="left:389.4px;top:545px;width:110.60px;height:4.00px;background:#2a82da;border-radius:2px;"></div>
<div style="left:499px;top:543.6px;width:17.00px;height:7.30px;background:#e1e0e1;border-radius:2.5px;"></div>
<svg style="position:absolute;left:522px;top:540px;" width="23" height="15" viewBox="0 0 23 15"><path d="M0 4.3 H3.6 L10.5 0 V15 L3.6 10.7 H0 Z" fill="#e00000"/><path d="M14.6 4.6 L21.2 11.2 M21.2 4.6 L14.6 11.2" stroke="#e00000" stroke-width="1.8"/></svg>
<svg style="position:absolute;left:551.2px;top:539.6px;" width="16" height="16" viewBox="0 0 16 16"><g transform="translate(8 8) scale(1.0)" fill="#d2d2d2"><rect x="-1.45" y="-7.25" width="2.9" height="3.4" rx="1" transform="rotate(0)"/><rect x="-1.45" y="-7.25" width="2.9" height="3.4" rx="1" transform="rotate(45)"/><rect x="-1.45" y="-7.25" width="2.9" height="3.4" rx="1" transform="rotate(90)"/><rect x="-1.45" y="-7.25" width="2.9" height="3.4" rx="1" transform="rotate(135)"/><rect x="-1.45" y="-7.25" width="2.9" height="3.4" rx="1" transform="rotate(180)"/><rect x="-1.45" y="-7.25" width="2.9" height="3.4" rx="1" transform="rotate(225)"/><rect x="-1.45" y="-7.25" width="2.9" height="3.4" rx="1" transform="rotate(270)"/><rect x="-1.45" y="-7.25" width="2.9" height="3.4" rx="1" transform="rotate(315)"/><circle r="5.15"/><circle r="2.75" fill="#1f1e1f"/></g></svg>
<div style="left:594px;top:450px;width:109.00px;height:18.00px;background:#4b4a4b;border-radius:3px;"></div>
<div style="left:685px;top:450px;width:1.00px;height:18.00px;background:#383738;"></div>
<svg style="position:absolute;left:691px;top:452px;" width="8" height="14" viewBox="0 0 8 14"><path d="M1.2 4.8 L4 2.1 L6.8 4.8 M1.2 9.6 L4 12.4 L6.8 9.6" fill="none" stroke="#aaaaaa" stroke-width="1.2"/></svg>
<div class="t" style="left:603.30px;top:454px;font-size:11.5px;line-height:11.5px;letter-spacing:0.6px;color:#dcdbdc;transform:scaleX(0.7750);">Fade</div>
<svg style="position:absolute;left:710px;top:451.4px;" width="16" height="16" viewBox="0 0 16 16"><g transform="translate(8 8) scale(1.0)" fill="#d2d2d2"><rect x="-1.45" y="-7.25" width="2.9" height="3.4" rx="1" transform="rotate(0)"/><rect x="-1.45" y="-7.25" width="2.9" height="3.4" rx="1" transform="rotate(45)"/><rect x="-1.45" y="-7.25" width="2.9" height="3.4" rx="1" transform="rotate(90)"/><rect x="-1.45" y="-7.25" width="2.9" height="3.4" rx="1" transform="rotate(135)"/><rect x="-1.45" y="-7.25" width="2.9" height="3.4" rx="1" transform="rotate(180)"/><rect x="-1.45" y="-7.25" width="2.9" height="3.4" rx="1" transform="rotate(225)"/><rect x="-1.45" y="-7.25" width="2.9" height="3.4" rx="1" transform="rotate(270)"/><rect x="-1.45" y="-7.25" width="2.9" height="3.4" rx="1" transform="rotate(315)"/><circle r="5.15"/><circle r="2.75" fill="#3a393a"/></g></svg>
<div class="t" style="left:594.70px;top:476px;font-size:11.5px;line-height:11.5px;letter-spacing:0.6px;color:#dcdbdc;transform:scaleX(0.7862);">Duration</div>
<div style="left:637px;top:471px;width:91.00px;height:19.00px;background:#1f1e1f;border-radius:3px;"></div>
<div style="left:714px;top:471px;width:14.00px;height:19.00px;background:#4b4a4b;border-radius:0 3px 3px 0;"></div>
<svg style="position:absolute;left:714px;top:471px;" width="14" height="19" viewBox="0 0 14 19"><path d="M2.5 7.5 L7 3 L11.5 7.5 M2.5 11.5 L7 16 L11.5 11.5" fill="none" stroke="#d0d0d0" stroke-width="1.3"/></svg>
<div class="t" style="left:644.50px;top:476px;font-size:11.5px;line-height:11.5px;letter-spacing:0.6px;color:#dcdbdc;transform:scaleX(0.7985);">300 ms</div>
<div style="left:739.5px;top:449.0px;width:137.50px;height:19.70px;background:#4b4a4b;border-radius:3px;"></div>
<div class="t" style="left:773.30px;top:454px;font-size:11.5px;line-height:11.5px;letter-spacing:0.6px;color:#dcdbdc;transform:scaleX(0.7894);">Start Streaming</div>
<div style="left:739.5px;top:471.05px;width:137.50px;height:19.70px;background:#4b4a4b;border-radius:3px;"></div>
<div class="t" style="left:773.30px;top:476px;font-size:11.5px;line-height:11.5px;letter-spacing:0.6px;color:#dcdbdc;transform:scaleX(0.7894);">Start Recording</div>
<div style="left:739.5px;top:493.1px;width:137.50px;height:19.70px;background:#4b4a4b;border-radius:3px;"></div>
<div class="t" style="left:763.50px;top:498px;font-size:11.5px;line-height:11.5px;letter-spacing:0.6px;color:#dcdbdc;transform:scaleX(0.7808);">Start Virtual Camera</div>
<div style="left:739.5px;top:515.15px;width:137.50px;height:19.70px;background:#4b4a4b;border-radius:3px;"></div>
<div class="t" style="left:781.00px;top:520px;font-size:11.5px;line-height:11.5px;letter-spacing:0.6px;color:#dcdbdc;transform:scaleX(0.7819);">Studio Mode</div>
<div style="left:739.5px;top:537.2px;width:137.50px;height:19.70px;background:#4b4a4b;border-radius:3px;"></div>
<div class="t" style="left:790.70px;top:542px;font-size:11.5px;line-height:11.5px;letter-spacing:0.6px;color:#dcdbdc;transform:scaleX(0.7795);">Settings</div>
<div style="left:739.5px;top:559.25px;width:137.50px;height:19.70px;background:#4b4a4b;border-radius:3px;"></div>
<div class="t" style="left:800.50px;top:564px;font-size:11.5px;line-height:11.5px;letter-spacing:0.6px;color:#dcdbdc;transform:scaleX(0.7667);">Exit</div>
<svg style="position:absolute;left:510px;top:610px;" width="19" height="14" viewBox="0 0 19 14"><circle cx="9.5" cy="7" r="3.2" fill="#8c8c8c"/><path d="M6 3.2 A5 5 0 0 0 6 10.8 M13 3.2 A5 5 0 0 1 13 10.8 M3.6 1.2 A8 8 0 0 0 3.6 12.8 M15.4 1.2 A8 8 0 0 1 15.4 12.8" fill="none" stroke="#8c8c8c" stroke-width="1.1"/></svg>
<div class="t" style="left:534.00px;top:612px;font-size:11.5px;line-height:11.5px;letter-spacing:0.6px;color:#dcdbdc;transform:scaleX(0.8069);">LIVE: 00:00:00</div>
<svg style="position:absolute;left:612px;top:612px;" width="10" height="10" viewBox="0 0 10 10"><circle cx="5" cy="5" r="4.6" fill="#a8a8a8"/></svg>
<div class="t" style="left:631.70px;top:612px;font-size:11.5px;line-height:11.5px;letter-spacing:0.6px;color:#dcdbdc;transform:scaleX(0.7906);">REC: 00:00:00</div>
<div class="t" style="left:720.20px;top:612px;font-size:11.5px;line-height:11.5px;letter-spacing:0.6px;color:#dcdbdc;transform:scaleX(0.8041);">CPU: 0.4%, 60.00 fps</div>
</body></html>
